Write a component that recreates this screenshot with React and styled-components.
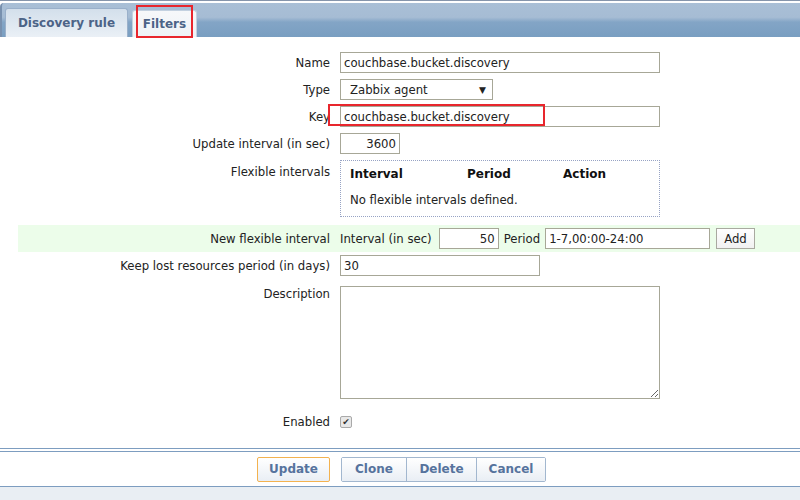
import React from 'react';
import styled, { createGlobalStyle } from 'styled-components';

const GlobalStyle = createGlobalStyle`
    body {
        margin: 0;
        background: #FFFFFF;
        font-family: "DejaVu Sans", Verdana, sans-serif;
        font-size: 11.7px;
        color: #222222;
    }
`;

const Page = styled.div`
    position: relative;
    width: 800px;
    height: 500px;
    overflow: hidden;
    display: flex;
    flex-direction: column;
`;

const Header = styled.div`
    border-top: 1px solid #8695ab;
    padding-top: 2px;
`;

const TabStrip = styled.div`
    display: flex;
    align-items: flex-end;
    gap: 4px;
    height: 34px;
    padding-left: 3px;
    border-left: 2px solid #7890ae;
    border-top-left-radius: 4px;
    background: linear-gradient(#a9bfd6 0%, #a6bcd4 42%, #83a5c6 56%, #799ec1 100%);
`;

const Tab = styled.div`
    display: flex;
    align-items: center;
    justify-content: center;
    box-sizing: border-box;
    width: ${props => props.width};
    height: ${props => props.active ? '29px' : '27px'};
    border: 1px solid ${props => props.active ? '#9ab0ca' : '#c3d1e0'};
    border-bottom: none;
    border-radius: 3px 3px 0 0;
    background: ${props => props.active
        ? 'linear-gradient(#d3dfeb, #eaf0f6)'
        : 'linear-gradient(#f6f8fa, #eef2f6)'};
    color: #4c6387;
    font-weight: bold;
    font-size: 12px;
`;

const Form = styled.div`
    display: flex;
    flex-direction: column;
    padding: 12px 0 0 18px;
`;

const Row = styled.div`
    display: flex;
    align-items: ${props => props.top ? 'flex-start' : 'center'};
    padding: 3px 0;
    margin-top: ${props => props.gap || 0}px;
    background: ${props => props.highlight ? '#ecfdea' : 'transparent'};
`;

const Label = styled.div`
    width: 322px;
    padding-right: 10px;
    box-sizing: border-box;
    text-align: right;
    padding-top: ${props => props.pt || 0}px;
    color: #222;
    white-space: nowrap;
`;

const Field = styled.div`
    display: flex;
    align-items: center;
    gap: 5px;
`;

const Caption = styled.span`
    margin-right: ${props => props.space || 0}px;
    white-space: nowrap;
`;

const TextBox = styled.div`
    box-sizing: border-box;
    width: ${props => props.width}px;
    height: 21px;
    border: 1px solid #a7a797;
    padding: 0 3px;
    display: flex;
    align-items: center;
    justify-content: ${props => props.right ? 'flex-end' : 'flex-start'};
    background: #fff;
    white-space: nowrap;
    overflow: hidden;
`;

const SelectBox = styled.div`
    box-sizing: border-box;
    width: 153px;
    height: 21px;
    border: 1px solid #a7a797;
    padding: 0 6px 0 9px;
    display: flex;
    align-items: center;
    justify-content: space-between;
    & > span:last-child {
        font-size: 9px;
    }
`;

const IntervalBox = styled.div`
    box-sizing: border-box;
    width: 320px;
    height: 57px;
    border: 1px dotted #97a3c4;
    padding: 6px 9px;
    display: flex;
    flex-direction: column;
    gap: 12px;
`;

const IntervalHead = styled.div`
    display: grid;
    grid-template-columns: 117px 96px auto;
    font-weight: bold;
    font-size: 12px;
    color: #111;
`;

const TextArea = styled.textarea`
    box-sizing: border-box;
    width: 320px;
    height: 113px;
    border: 1px solid #a7a797;
    margin: 0;
    outline: none;
    resize: both;
`;

const SmallButton = styled.div`
    box-sizing: border-box;
    height: 21px;
    padding: 0 7px;
    margin-left: 1px;
    border: 1px solid #a9a9a0;
    background: linear-gradient(#ffffff, #f1f1f1);
    display: flex;
    align-items: center;
    color: #222;
`;

const CheckBox = styled.div`
    box-sizing: border-box;
    width: 12px;
    height: 12px;
    border: 1px solid #a9a9a9;
    border-radius: 2px;
    background: #e8e8e8;
    display: flex;
    align-items: center;
    justify-content: center;
    font-size: 9px;
    color: #333;
`;

const Footer = styled.div`
    margin-top: 16px;
    border-top: 1px solid #7d9dc0;
    border-bottom: 1px solid #7d9dc0;
    height: 2px;
`;

const ButtonBar = styled.div`
    display: flex;
    justify-content: center;
    align-items: center;
    gap: 11px;
    height: 34px;
    border-bottom: 1px solid #7d9dc0;
    padding-left: 3px;
`;

const Bottom = styled.div`
    flex: 1;
    background: #e9eef3;
`;

const ButtonGroup = styled.div`
    display: flex;
    border: 1px solid #a2b7cf;
    border-radius: 2px;
`;

const Button = styled.div`
    box-sizing: border-box;
    height: ${props => props.primary ? '25px' : '23px'};
    width: ${props => props.width}px;
    display: flex;
    align-items: center;
    justify-content: center;
    background: linear-gradient(#ffffff, #e9eef4);
    border: ${props => props.primary ? '1px solid #f3b24f' : 'none'};
    border-left: ${props => props.primary ? '1px solid #f3b24f' : props.first ? 'none' : '1px solid #a2b7cf'};
    border-radius: ${props => props.primary ? '2px' : '0'};
    color: #56739d;
    font-weight: bold;
    font-size: 12px;
`;

const Marker = styled.div`
    position: absolute;
    left: ${props => props.x}px;
    top: ${props => props.y}px;
    width: ${props => props.w}px;
    height: ${props => props.h}px;
    border: 2px solid #e8262d;
    box-sizing: border-box;
    pointer-events: none;
`;

const App = () => {
    return <Page>
        <GlobalStyle />
        <Header>
            <TabStrip>
                <Tab active width="123px">Discovery rule</Tab>
                <Tab width="65px">Filters</Tab>
            </TabStrip>
        </Header>
        <Form>
            <Row>
                <Label>Name</Label>
                <TextBox width={320}>couchbase.bucket.discovery</TextBox>
            </Row>
            <Row>
                <Label>Type</Label>
                <SelectBox><span>Zabbix agent</span><span>▼</span></SelectBox>
            </Row>
            <Row>
                <Label>Key</Label>
                <TextBox width={320}>couchbase.bucket.discovery</TextBox>
            </Row>
            <Row>
                <Label>Update interval (in sec)</Label>
                <TextBox width={60} right>3600</TextBox>
            </Row>
            <Row top>
                <Label pt={5}>Flexible intervals</Label>
                <IntervalBox>
                    <IntervalHead>
                        <span>Interval</span>
                        <span>Period</span>
                        <span>Action</span>
                    </IntervalHead>
                    <div>No flexible intervals defined.</div>
                </IntervalBox>
            </Row>
            <Row highlight gap={5}>
                <Label>New flexible interval</Label>
                <Field>
                    <Caption space={2}>Interval (in sec)</Caption>
                    <TextBox width={60} right>50</TextBox>
                    <Caption>Period</Caption>
                    <TextBox width={165}>1-7,00:00-24:00</TextBox>
                    <SmallButton>Add</SmallButton>
                </Field>
            </Row>
            <Row>
                <Label>Keep lost resources period (in days)</Label>
                <TextBox width={200}>30</TextBox>
            </Row>
            <Row top gap={4}>
                <Label pt={1}>Description</Label>
                <TextArea readOnly defaultValue="" />
            </Row>
            <Row gap={10}>
                <Label>Enabled</Label>
                <CheckBox>✔</CheckBox>
            </Row>
        </Form>
        <Footer />
        <ButtonBar>
            <Button primary width={73}>Update</Button>
            <ButtonGroup>
                <Button first width={64}>Clone</Button>
                <Button width={70}>Delete</Button>
                <Button width={69}>Cancel</Button>
            </ButtonGroup>
        </ButtonBar>
        <Bottom />
        <Marker x={136} y={5} w={57} h={33} />
        <Marker x={328} y={104} w={217} h={22} />
    </Page>
}

export default App;
